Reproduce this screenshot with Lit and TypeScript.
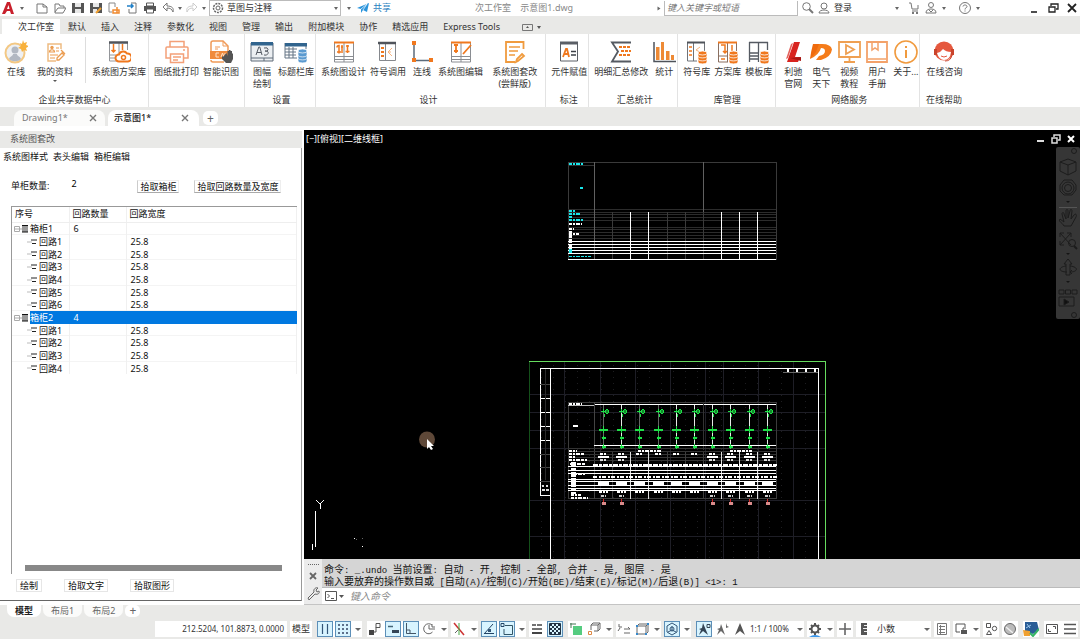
import { LitElement, html, svg, css, nothing } from "lit";
import { customElement, property, state } from "lit/decorators.js";
import { classMap } from "lit/directives/class-map.js";

const O = "#f0781e";
const G = "#5b5f66";

const db = svg`<g fill=${O} stroke="#fff" stroke-width=".8"><path d="M13 19v3c0 2.500 9 2.500 9 0v-3z"/><path d="M13 16v3c0 2.500 9 2.500 9 0v-3z"/><path d="M13 13v3c0 2.500 9 2.500 9 0v-3z"/><ellipse cx="17.500" cy="13" rx="4.500" ry="2"/></g>`;
const cabinet = svg`<path d="M2.500 2v20h19V2M2 16.500h20M2 19.500h20M12 2v20" stroke="#8a8d92" fill="none"/><path d="M2 2.500h20" stroke=${O} stroke-width="2"/>`;

const icons: Record<string, unknown> = {
  online: svg`<circle cx="11" cy="13" r="9.500" fill="#eef0f3" stroke="#f3c884" stroke-width="2"/><circle cx="11" cy="10" r="3.500" fill="#b2b8c2"/><path d="M5 19c1-3 4-3 4-5h4c0 2 3 2 4 5-3 3-9 3-12 0z" fill="#b2b8c2"/><path d="M19 0l1 3 3-1-1 3 3 1-3 2 1 3-3-1-2 2-1-3-3-1 3-2-1-3 2 1z" fill="#f8b13c"/>`,
  mine: svg`<path d="M18 9V4H5v17h8" fill="none" stroke="#eebc82" stroke-width="1.500"/><circle cx="9" cy="7.500" r="1.700" fill="#eb9c50"/><path d="M6.500 12c0-3 5-3 5 0zM13 8h3M13 11h3M7 15h8M7 18h5" stroke="#eb9c50" fill="none" stroke-width="1.200"/><path d="M14 18l5-5 2 2-5 5h-2zM18 10l4 4" stroke="#eb9c50" fill="none" stroke-width="1.300"/>`,
  cloud: svg`<path d="M2.500 3v18H10M12 3v12M20.500 3v7M2 15h7M2 18h7" stroke="#94969a" fill="none"/><path d="M2 2.500h19" stroke="#50545b" stroke-width="2.500"/><path d="M6.500 4v8m-2-2l2 2 2-2M15.500 4v6" stroke=${O} fill="none" stroke-width="1.500"/><path d="M12 21.500a3.500 3.500 0 010-7 4.500 4.500 0 018-1 4 4 0 011 8z" fill="#fff" stroke=${O} stroke-width="2"/><circle cx="16.500" cy="17.500" r="2" fill="none" stroke=${O} stroke-width="1.500"/>`,
  printer: svg`<g stroke="#f3a078" fill="none" stroke-width="1.500"><path d="M5 7V1.500h14V7M5 18H1V8q0-1 1-1h20q1 0 1 1v10h-4"/><path d="M5.500 14h13v8.500h-13z" fill="#fff"/><path d="M8 17h8M8 20h5M18 10h2"/></g>`,
  cad: svg`<path d="M2 11V3q0-2 2-2h10l5 5v5M2 20q0 2 2 2h11" fill="none" stroke="#f09a58" stroke-width="1.500"/><path d="M14 1v5h5M6 7h5M6 9h3" stroke="#f09a58" fill="none"/><path d="M1 11h19v8H1z" fill="#f08a3c"/><path d="M10 13H7v4h3m2 0l1.500-4 1.500 4m1-4v4" stroke="#ffe2c8" fill="none"/><path d="M14 17l-1-1v3l4 4h5l2-4v-5l-1-1v3-5h-1.500v4-5H20v5-4h-1.500v5l-1-3-1 1z" fill="#555"/>`,
  a3: svg`<path d="M1 3h22v18H1z" fill="#eceff2" stroke="#5e6b78"/><path d="M1 2h22v3.500H1z" fill="#31648e"/><path d="M6 15l2.800-8h1L12 15M7 12.500h4M14 8q4-1 4 1.500T15 11q4 0 3 2.500T14 15" fill="none" stroke="#555b64"/><path d="M1 18h22M14 18v3" stroke="#5e6b78"/>`,
  titlelib: svg`<path d="M1 3.500h21V9M1 3v15h12M1 9h12M1 12h11M1 15h11M5 7v11M9 7v11" fill="none" stroke="#657485"/><path d="M1 3h22v3.500H1z" fill="#31648e"/><g fill="#5b9ad0" stroke="#fff" stroke-width=".7"><path d="M14 18v3c0 2.500 9 2.500 9 0v-3z"/><path d="M14 15v3c0 2.500 9 2.500 9 0v-3z"/><path d="M14 12v3c0 2.500 9 2.500 9 0v-3z"/><ellipse cx="18.500" cy="11" rx="4.500" ry="2"/></g>`,
  design: svg`${cabinet}<path d="M5 7.500a2 2 0 012-2v8m-2-1.500h4M10 5v8M15.500 5v8m-2-1.500h4M14 6h3M9 7h2" stroke=${O} fill="none" stroke-width="1.500"/>`,
  symbol: svg`<path d="M3.500 3v17.500h16V4M9.500 4v16" fill="none" stroke="#85888d"/><path d="M2 3h18" stroke="#50545b" stroke-width="2.500"/><path d="M5 8h3M5 12h3M5 16h3" stroke=${O} stroke-width="1.800"/><path d="M16 8l-4 4 4 4m-2-5v2" stroke="#f5b480" fill="none"/>`,
  line: svg`<path d="M4 3v17.500h18" fill="none" stroke="#5c6b7b" stroke-width="1.500"/><path d="M2 1h4v4H2zM2 18h4v4H2zM19 18h4v4h-4z" fill=${O}/>`,
  edit: svg`${cabinet}<path d="M7 4v9M5 5h4M5 11h4M14 14l8-9" stroke=${O} stroke-width="1.800"/>`,
  revise: svg`<path d="M20.500 9V2H3v20h9M19 14l2 2-6 5-2 1 1-3z" fill="none" stroke="#f09b3e" stroke-width="1.800"/><path d="M6 7h11M6 11h9M6 15h6" stroke="#f09b3e" stroke-width="1.500"/>`,
  assign: svg`<path d="M3.500 3v18h17V3" fill="none" stroke=${G}/><path d="M3 3h18" stroke=${G} stroke-width="3"/><path d="M6 17l3-8h1l2 8M7 14h4" fill="none" stroke=${O} stroke-width="1.800"/><path d="M14 11.500h5M14 15h5" stroke="#3d4148" stroke-width="1.600"/>`,
  sum: svg`<path d="M22 2.500H3l6 9-6 10h19" fill="none" stroke="#555a62" stroke-width="1.800"/><path d="M10 7h12M12 11h10M10 15h12" stroke=${O} stroke-width="2" stroke-dasharray="3 1"/>`,
  chart: svg`<path d="M2 2v19.500h22" fill="none" stroke="#4e535b" stroke-width="1.500"/><path d="M4 7h3.500v13H4zM9 2h3v18H9zM14 11h3.500v9H14zM19 15h3v5h-3z" fill="#ee8a35"/>`,
  symlib: svg`<path d="M2.500 3v18H12M8.500 3v18M19.500 3v8" fill="none" stroke="#6f7379"/><path d="M2 2.500h18" stroke="#50545b" stroke-width="2"/><path d="M4 7h3M4 11h3M4 15h3" stroke=${O} stroke-width="1.500"/><path d="M15 7l-4 3 4 2" stroke="#f5b480" fill="none"/>${db}`,
  planlib: svg`<path d="M2.500 3v19H12M11.500 3v19M20.500 3v8M3 16h8" fill="none" stroke="#8a6f60"/><path d="M2 2.500h19" stroke=${O} stroke-width="2"/><path d="M5 5h4v8m-2-2l2 2 2-2M16 5v6M5 19h4" stroke=${O} fill="none" stroke-width="1.500"/>${db}`,
  tpllib: svg`<path d="M2.500 2v20M11.500 2v20M20.500 2v8M2 2.500h19M2 13h9M2 16h9M2 19h9" fill="none" stroke="#555a62" stroke-width="1.300"/>${db}`,
  lichi: svg`<path d="M13 2h6l-5 15h5l-2 5H6z" fill="#d8241f"/><path d="M10 4l2-1-5 15-2 1z" fill="#e4625c"/><path d="M9 18l11-1v4z" fill="#a91814"/>`,
  dq: svg`<path d="M8 4h5q9 0 10 5.500-1 7.500-11 10.500H7l3-4q6-1 6-5 0-3-4-3-2 7-11 11z" fill="#f57c1a"/><path d="M4 4h6L7 12 1 19q1-8 3-15z" fill="#ef6a0c"/>`,
  video: svg`<path d="M2 2h21v15H2zM12.500 17v4M7 22h11M9 5l8 4.500L9 14z" fill="none" stroke="#efa052" stroke-width="1.800"/>`,
  book: svg`<path d="M2 2h20v20H2z" fill="none" stroke="#f3a26a" stroke-width="1.800"/><path d="M7 2v8l3-2 3 2V2M3 19h18" fill="none" stroke="#f3a26a" stroke-width="1.500"/>`,
  about: svg`<circle cx="12" cy="12" r="11" fill="none" stroke="#f09a3e" stroke-width="1.600"/><path d="M12 10v8M12 6v2" stroke="#f09a3e" stroke-width="2"/>`,
  service: svg`<circle cx="12" cy="11" r="9.500" fill="#e5583e"/><path d="M5 13q4-1 6-4 3 3 8 3-1 8-7 8-5 0-7-7z" fill="#fff"/><path d="M2 9v6h3V9zM19 9v6h3V9z" fill="#c9442c"/><path d="M20 15q-1 6-7 6" fill="none" stroke="#c9442c"/><path d="M9 16q3 2 6 0" stroke="#e5583e" fill="none"/>`,
};

interface Tool { icon: string; lines: string[]; arrow?: boolean; sep?: boolean; late?: boolean; }
interface Group { title: string; cls: string; tools: Tool[]; }
const t = (icon: string, ...lines: string[]): Tool => ({ icon, lines });

const GROUPS: Group[] = [
  { title: "企业共享数据中心", cls: "data", tools: [t("online", "在线"), { ...t("mine", "我的资料"), arrow: true }, { ...t("cloud", "系统图方案库"), sep: true }] },
  { title: "", cls: "print", tools: [t("printer", "图纸批打印"), t("cad", "智能识图")] },
  { title: "设置", cls: "", tools: [t("a3", "图幅", "绘制"), t("titlelib", "标题栏库")] },
  { title: "设计", cls: "end", tools: [t("design", "系统图设计"), t("symbol", "符号调用"), t("line", "连线"), t("edit", "系统图编辑"), { ...t("revise", "系统图套改", "(尝鲜版)"), late: true }] },
  { title: "标注", cls: "", tools: [t("assign", "元件赋值")] },
  { title: "汇总统计", cls: "", tools: [t("sum", "明细汇总修改"), t("chart", "统计")] },
  { title: "库管理", cls: "lib", tools: [t("symlib", "符号库"), t("planlib", "方案库"), t("tpllib", "模板库")] },
  { title: "网络服务", cls: "", tools: [t("lichi", "利驰", "官网"), t("dq", "电气", "天下"), t("video", "视频", "教程"), t("book", "用户", "手册"), t("about", "关于...")] },
  { title: "在线帮助", cls: "last", tools: [t("service", "在线咨询")] },
];

@customElement("ribbon-bar")
class RibbonBar extends LitElement {
  static styles = css`
    :host { display: flex; background: #fff; height: 73px; }
    .group { display: flex; flex-direction: column; box-sizing: border-box; padding-left: 3px; border-right: 1px solid #e3e3e3; }
    .group.data { padding: 0 1px 0 2px; }
    .group.print { padding-right: 4px; }
    .group.end { padding-right: 7px; }
    .group.lib { padding-right: 2px; }
    .group.last { border: 0; padding-left: 4px; }
    .tools { display: flex; height: 59px; margin-right: -1px; }
    .tool { position: relative; display: flex; flex-direction: column; align-items: center; min-width: 28px; padding: 6px 2px 0; border: 0; background: none; font: inherit; color: #333; line-height: 12px; white-space: nowrap; }
    .data .tool { margin-right: 5px; }
    .data .tool:last-child { margin-right: 0; }
    .late { margin-left: 5px; }
    .tool svg { width: 24px; height: 24px; margin-bottom: 2px; }
    .caret { border: 2px solid transparent; border-top-color: #555; margin-top: 2px; }
    .sep { width: 1px; margin: 3px 4px 10px 5px; background: #ddd; }
    .title { line-height: 14px; text-align: center; color: #333; white-space: nowrap; }
  `;
  render() {
    return GROUPS.map((g) => html`<section class="group ${g.cls}">
      <div class="tools">${g.tools.map((x) => html`${x.sep ? html`<span class="sep"></span>` : nothing}
        <button class=${classMap({ tool: true, late: !!x.late })}><svg viewBox="0 0 24 24">${icons[x.icon]}</svg>${x.lines.map((l) => html`<span>${l}</span>`)}${x.arrow ? html`<span class="caret"></span>` : nothing}</button>`)}
      </div><div class="title">${g.title}</div></section>`);
  }
}

const rng = (a: number, b: number, s: number) => { const r: number[] = []; for (let i = a; i <= b; i += s) r.push(i); return r; };
const seg = (x1: number, y1: number, x2: number, y2: number, c: string) => svg`<path d="M${x1} ${y1}L${x2} ${y2}" stroke=${c}/>`;
const H = (y: number, x1: number, x2: number, c = "#fff") => seg(x1, y + 0.5, x2, y + 0.5, c);
const V = (x: number, y1: number, y2: number, c = "#fff") => seg(x + 0.5, y1, x + 0.5, y2, c);
const mark = (x: number, y: number, w: number, c: string, h = 2, dash = "3 1 2 1 4 1") => svg`<path d="M${x} ${y}h${w}" stroke=${c} stroke-width=${h} stroke-dasharray=${dash}/>`;

@customElement("drawing-canvas")
class DrawingCanvas extends LitElement {
  static styles = css`
    :host { position: relative; display: flex; flex-direction: column; background: #000; color: #fff; overflow: hidden; min-height: 0; }
    .scene { position: absolute; inset: 0; width: 100%; height: 100%; }
    .head { position: relative; display: flex; align-items: center; height: 17px; padding: 0 4px 0 2px; }
    .head button, .nav button { border: 0; padding: 0; background: none; color: inherit; font: inherit; display: flex; }
    .space { flex: 1; }
    .win { width: 10px; height: 10px; margin-left: 5px; }
    .nav { position: relative; align-self: flex-end; width: 24px; height: 172px; background: #363636; display: flex; flex-direction: column; align-items: center; justify-content: space-between; border-radius: 2px; }
    .nav svg { width: 20px; height: 172px; }
  `;
  render() {
    const cols = [603, 621, 639, 658, 676, 694, 712, 730, 749, 767];
    const seps = [612, 630, 648, 667, 685, 703, 721, 739, 757];
    const hot = [630, 648, 721, 739, 757];
    const loads = [603, 621, 712, 730, 749, 767];
    return html`<svg class="scene" shape-rendering="crispEdges" fill="none" role="img" aria-label="图纸">
      <g transform="translate(-304 -130)">
        <path d="M568.500 162.500H776.500V259.500H568.500z" stroke="#3a3a3a"/>
        ${H(165, 568, 594, "#333")}
        ${[209, 212, 214, 217, 220, 227, 229, 232, 235, 238].map((y) => H(y, 568, 776, "#2c2c2c"))}
        ${V(594, 162, 259, "#606060")}${V(703, 162, 212, "#606060")}
        ${seps.map((x) => V(x, 212, 259, hot.includes(x) ? "#fff" : "#3a3a3a"))}
        ${[241, 244, 247, 250, 253, 259].map((y) => H(y, 568, 776))}
        ${mark(569, 164, 14, "#18e6ea")}${mark(580, 188, 4, "#18e6ea")}
        ${mark(569, 211, 6, "#18e6ea")}${mark(569, 214, 11, "#18e6ea")}${mark(569, 217, 3, "#18e6ea")}${mark(569, 220, 14, "#18e6ea")}
        ${mark(569, 224, 13, "#fff")}${mark(569, 229, 5, "#fff")}${mark(569, 234, 10, "#fff")}
        <path d="M570.500 231v20" stroke="#fff" stroke-width="3" stroke-dasharray="7 1 4 1"/>
        ${mark(569, 250, 3, "#18e6ea")}${mark(569, 252, 3, "#18e6ea")}${mark(569, 256.500, 22, "#18e6ea", 1)}

        ${rng(541, 811, 12).map((x) => svg`<path d="M${x + 0.5} 365V559" stroke="#1d1d20" stroke-dasharray="1 5"/>`)}
        ${[564, 600, 635, 670, 705, 723, 758, 793].map((x) => V(x, 362, 559, "#1e1e26"))}
        ${[394, 412, 430, 448, 500, 536].map((y) => H(y, 530, 825, "#1e1e26"))}
        ${V(529, 361, 559, "#14501a")}${H(361, 529, 826, "#66dc5e")}${V(825, 361, 559, "#66dc5e")}
        ${V(550, 368, 559)}${H(368, 540, 819)}${V(818, 368, 559)}${V(540, 368, 496)}${H(495, 540, 551)}
        ${[398, 412, 426, 440].map((y) => H(y, 540, 550))}${[384, 454, 467, 481].map((y) => H(y, 540, 550, "#444"))}${V(545, 369, 480, "#2a2a2a")}
        ${mark(542, 486, 7, "#ddd", 2, "2 2")}${mark(542, 490, 7, "#ddd", 2, "3 1")}
        ${H(372, 783, 818, "#666")}${mark(787, 370.500, 31, "#fff", 3, "2 7")}

        <path d="M568.500 402.500H776.500V498.500H568.500z" stroke="#3c3c3c"/>
        ${H(404, 594, 776)}${H(405, 568, 594, "#bbb")}${mark(569, 403.500, 13, "#fff")}${V(594, 402, 499, "#444")}${V(703, 402, 450, "#333")}
        ${mark(573, 425.500, 5, "#fff", 2, "5")}
        ${H(445, 594, 776)}
        ${[448, 451, 454, 457, 460].map((y) => H(y, 568, 776, "#333"))}
        ${seps.map((x) => V(x, 452, 499, hot.includes(x) ? "#ddd" : "#3c3c3c"))}
        ${cols.map((x, i) => svg`${V(x, 405, 446, i % 3 === 1 || i > 4 ? "#e8e8e8" : "#666")}
          <path d="M${x} 409v4m1 1v3M${x - 2} 411h4M${x + 0.5} 426v7M${x + 0.5} 436v4M${x + 0.5} 444v5" stroke="#1fe048"/>
          <circle cx=${x + 4} cy="411.500" r="1.700" fill="#128a2c" stroke="#1fe048"/>
          ${mark(x - 4, 430, 9, "#1fe048", 2, "9")}${mark(x - 1, 438, 4, "#1fe048", 2, "4")}${mark(x - 1, 447, 4, "#1fe048", 2, "4")}
          ${mark(x - 3, 454, 6, "#fff")}${mark(x - 4, 492, 9, "#fff", 2)}`)}
        ${mark(638, 450.500, 23, "#fff")}${mark(730, 450.500, 22, "#fff")}
        ${loads.map((x) => svg`${mark(x - 5, 457, 11, "#fff", 2, "11")}${mark(x - 3, 460, 6, "#ddd")}${mark(x - 2, 496, 5, "#ccc")}
          <path d="M${x + 0.5} 499v3" stroke="#d02020"/><path d="M${x - 1} 502h4v3h-4z" fill="#d98c8c"/>`)}
        ${mark(593, 464.500, 184, "#fff", 2, "5 1 3 1")}
        ${[466, 470, 473, 479, 481, 485, 488, 490].map((y) => H(y, 568, 776))}
        ${mark(593, 476.500, 184, "#fff", 2, "4 2 2 1")}
        ${cols.map((x) => mark(x - 5, 483, 11, "#fff", 3, "11"))}
        <path d="M573 462v32" stroke="#fff" stroke-width="5" stroke-dasharray="5 1 3 1"/>
        ${mark(569, 451, 8, "#fff")}${mark(569, 454, 16, "#fff")}${mark(569, 457, 6, "#fff")}${mark(569, 459.500, 18, "#fff")}${mark(570, 464, 15, "#fff")}${mark(571, 474, 14, "#fff")}${mark(571, 495, 10, "#fff")}${mark(571, 497.500, 17, "#fff")}

        <path d="M316 500l4 4 4-4M320.500 504v5M315.500 511v36M312.500 544v6" stroke="#fff"/>
        <path d="M354 538.500h1M362 546.500h1" stroke="#fff"/><path d="M356 539.500h1M362 538.500h1" stroke="#666"/>
        <g shape-rendering="auto"><circle cx="427" cy="439.500" r="8" fill="#5e4838"/><path d="M427 439v10l2-2 2 3 2-1-2-3h3z" fill="#fff"/></g>
      </g></svg>
      <div class="head"><button>[−][俯视][二维线框]</button><span class="space"></span>
        <button class="win" aria-label="最小化"><svg viewBox="0 0 10 10"><path d="M1 6h7v2H1z" fill="#ddd"/></svg></button>
        <button class="win" aria-label="还原"><svg viewBox="0 0 10 10" fill="none" stroke="#ddd" stroke-width="1.500"><path d="M3 3V1h6v5H7M1 4h5v5H1z"/></svg></button>
        <button class="win" aria-label="关闭"><svg viewBox="0 0 10 10" stroke="#fff" stroke-width="2"><path d="M2 2l6 6M8 2L2 8"/></svg></button>
      </div>
      <div class="nav"><svg viewBox="0 0 20 172" fill="none" stroke="#1c1c1c">
        <circle cx="16" cy="4" r="2.500"/><path d="M10 12l8 3v9l-8 4-8-4v-9zM2 15l8 3 8-3M10 18v10"/><path d="M6 33h8l4 5v5l-4 5H6l-4-4v-6z"/><circle cx="10" cy="41" r="6"/><circle cx="10" cy="41" r="3.500"/>
        <path d="M8 54h4l-2 2zM8 106h4l-2 2zM8 134h4l-2 2z" fill="#151515" stroke="none"/><path d="M1 60.500h18" stroke="#555"/>
        <path d="M6 79c-2-4-6-4-4-7l4 3-2-8c0-2 2-2 2 0l2 5V64c0-2 2-2 2 0v7l2-7c0-2 2-2 2 0l-1 8 3-4c2-2 3 0 2 2l-5 9z"/>
        <path d="M2 86l11 12M13 86L2 98M2 90v-4h4M9 86h4v4M2 94v4h4"/><circle cx="14" cy="96" r="3.500"/><path d="M16 99l3 3" stroke-width="2"/>
        <path d="M8 128v-11H6l4-5 4 5h-2v11zM8 119c-8 1-8 6 1 6M12 119c9 1 8 6 0 6l2-2m-2 2l2 2"/>
        <path d="M1 143h5v4H1zM7.500 143h5v4h-5zM14 143h5v4h-5zM1 150h15v9H1z"/><path d="M6 152v6l5-3z" fill="#111"/><circle cx="16" cy="168" r="2.500"/>
      </svg></div>`;
  }
}

@customElement("revision-panel")
class RevisionPanel extends LitElement {
  @state() private selected = 7;
  static styles = css`
    :host { display: flex; flex-direction: column; background: #fff; min-height: 0; color: #111; padding: 1px 2px 4px 0; }
    .head { height: 17px; line-height: 15px; background: #e9e9e7; padding-left: 10px; color: #555; }
    .body { flex: 1; display: flex; flex-direction: column; border-right: 1px solid #999; border-bottom: 1px solid #666; min-height: 0; }
    .tabs { display: flex; gap: 5px; padding: 2px 0 0 3px; height: 14px; line-height: 14px; }
    button { font: inherit; color: inherit; background: #fff; border: 0; padding: 0; white-space: nowrap; }
    .count { display: flex; align-items: center; margin: 15px 0 13px 11px; height: 14px; white-space: nowrap; }
    .count input { width: 40px; margin: 0 26px 5px 22px; padding: 0; border: 0; font: inherit; height: 12px; }
    .count .push { height: 13px; line-height: 11px; padding: 0 2px; border: 1px solid #eee; border-bottom-color: #aaa; border-left-color: #ccc; }
    .count .push + .push { margin-left: 15px; }
    .tree { flex: 1; display: flex; flex-direction: column; margin: 0 4px 0 11px; border-top: 1px solid #999; border-left: 1px solid #999; min-height: 0; }
    table { border-collapse: collapse; table-layout: fixed; width: 100%; }
    .name { width: 57px; } .num { width: 57px; }
    th { font-weight: 400; text-align: left; height: 15px; line-height: 14px; padding: 0 3px; border-bottom: 1px solid #eee; border-right: 1px solid #f0f0f0; box-sizing: border-box; }
    td { height: 13px; line-height: 12px; padding: 0 0 0 4px; border-right: 1px solid #f0f0f0; box-sizing: border-box; }
    tr:nth-child(3n) td { height: 12px; line-height: 11px; }
    tr:nth-child(odd) td { box-shadow: inset 0 -1px #f4f4f4; }
    tbody td:first-child { padding-left: 2px; }
    .node { display: flex; align-items: center; }
    .node svg { width: 16px; height: 10px; flex: none; }
    .leaf { padding-left: 9px; }
    .node span { flex: 1; }
    tr.on td { background: #0078e0; color: #fff; border-color: #0078e0; box-shadow: none; }
    tr.on td:first-child { background: linear-gradient(90deg, #fff 18px, #0078e0 18px); }
    .scroll { height: 6px; background: #888; margin: auto 15px 3px 13px; }
    .foot { display: flex; gap: 22px; padding: 5px 0 8px 16px; }
    .foot button { border: 1px solid #e6e6e6; padding: 0 3px; height: 13px; line-height: 11px; }
  `;
  render() {
    const rows: { name: string; n?: number; w?: string }[] = [];
    [6, 4].forEach((n, b) => {
      rows.push({ name: `箱柜${b + 1}`, n });
      for (let i = 1; i <= n; i++) rows.push({ name: `回路${i}`, w: "25.8" });
    });
    return html`<div class="head">系统图套改</div><div class="body">
      <nav class="tabs"><button>系统图样式</button><button>表头编辑</button><button>箱柜编辑</button></nav>
      <div class="count"><label for="qty">单柜数量:</label><input id="qty" value="2"><button class="push">拾取箱柜</button><button class="push">拾取回路数量及宽度</button></div>
      <div class="tree"><table><thead><tr><th class="name">序号</th><th class="num">回路数量</th><th>回路宽度</th></tr></thead><tbody>
        ${rows.map((r, i) => html`<tr class=${classMap({ on: i === this.selected })} @click=${() => (this.selected = i)}>
          <td><div class=${classMap({ node: true, leaf: !r.n })}><svg viewBox="0 0 16 10">${r.n
            ? svg`<path d="M.5 2.500h5v5h-5zM1 5h7" fill="none" stroke="#aaa"/><path d="M8 1h6v7H8z" fill="#999"/><path d="M8 1.500h6M8 8h6" stroke="#111"/>`
            : svg`<path d="M4 5h5" stroke="#bbb"/><path d="M8 3h6M9 6.500h4" stroke="#222" fill="none"/>`}</svg><span>${r.name}</span></div></td>
          <td>${r.n ?? ""}</td><td>${r.w ?? ""}</td></tr>`)}
      </tbody></table><div class="scroll"></div></div>
      <div class="foot"><button>绘制</button><button>拾取文字</button><button>拾取图形</button></div></div>`;
  }
}

@customElement("command-line")
class CommandLine extends LitElement {
  static styles = css`
    :host { display: grid; grid-template-columns: 18px 1fr; background: #ececec; height: 46px; box-sizing: border-box; border-bottom: 1px solid #c4c4c4; }
    .strip svg { width: 18px; height: 45px; display: block; }
    .log { background: #d5d5d5; height: 29px; box-sizing: border-box; padding: 4px 2px 0; border-bottom: 1px solid #bbb; font-size: 10px; line-height: 12px; color: #111; white-space: nowrap; overflow: hidden; }
    .log div { height: 12px; }
    .ascii { font: 9px/12px "Liberation Mono", monospace; white-space: pre; }
    .entry { display: flex; align-items: center; background: #fff; height: 16px; padding-left: 3px; }
    .entry svg { width: 19px; height: 10px; margin-right: 6px; }
    input { flex: 1; border: 0; padding: 0; font: italic 10px/14px "Noto Sans", "Noto Sans CJK SC", sans-serif; background: none; outline: 0; }
    input::placeholder { color: #888; }
  `;
  private mixed(s: string) {
    return s.split(/([\x20-\x7e]+)/).map((p, i) => (i % 2 ? html`<span class="ascii">${p}</span>` : p));
  }
  render() {
    return html`<div class="strip"><svg viewBox="0 0 18 45" fill="none" stroke="#666"><path d="M4 5.500h12" stroke-dasharray="1 1"/><path d="M6 14l6 6M12 14l-6 6" stroke-width="1.800"/><path d="M4 39l6-6c-1-3 2-5 4-4l-2 2 1 2 2-1c1 2-1 4-4 3l-6 6z"/></svg></div>
      <div><div class="log"><div>${this.mixed("命令: _.undo 当前设置: 自动 - 开, 控制 - 全部, 合并 - 是, 图层 - 是")}</div><div>${this.mixed("输入要放弃的操作数目或 [自动(A)/控制(C)/开始(BE)/结束(E)/标记(M)/后退(B)] <1>: 1")}</div></div>
      <div class="entry"><svg viewBox="0 0 19 10"><path d="M.5.500h11v9H.5zM2.500 3l2 2-2 2M6 7.500h3" fill="none" stroke="#555"/><path d="M14 4h5l-2.500 3z" fill="#555"/></svg><input aria-label="命令" placeholder="键入命令"></div></div>`;
  }
}

const st: Record<string, unknown> = {
  grid: svg`<path d="M5.500 3v10M10.500 3v10" stroke="#357" stroke-width="1.200"/>`,
  dots: svg`<path d="M3 4h10M3 8h10M3 12h10" stroke="#346" stroke-width="1.500" stroke-dasharray="2 2"/>`,
  snap: svg`<path d="M9 2.500h4v4H9zM9 6v5H4" stroke="#555"/><path d="M2 9h5v5H2z" fill="#444"/>`,
  infer: svg`<path d="M3 5.500h5" stroke="#467" stroke-width="1.500"/><path d="M7 9h7v3H7z" fill="#345"/>`,
  ortho: svg`<path d="M3.500 2v10.500H13M3 9h4v4" stroke="#456"/>`,
  polar: svg`<path d="M11 4a5 5 0 10.500 7M8 8h6M8 8V4M11 3v3h3" stroke="#666"/>`,
  axes: svg`<path d="M3 2l10 12" stroke="#c33" stroke-width="1.500"/><path d="M8 2v12" stroke="#4a4"/><path d="M4 12l3-3" stroke="#666"/>`,
  track: svg`<path d="M3 13L12 3M3 12.500h10" stroke="#246"/><path d="M7 8h3v3H7z" fill="#357"/>`,
  osnap: svg`<path d="M6 4.500h7.500v9H5V8" stroke="#356"/><path d="M2 2.500h3v3H2z" stroke="#246"/>`,
  weight: svg`<path d="M3 4h4m1 0h5M3 8h10" stroke="#444" stroke-width="1.500"/><path d="M3 12h10" stroke="#444" stroke-width="2"/>`,
  checker: svg`<path d="M2.500 2.500h11v11h-11z" stroke="#234"/><path d="M3 4h10M3 8h10M3 12h10" stroke="#234" stroke-width="2" stroke-dasharray="2 2"/><path d="M5 6h8M5 10h8" stroke="#234" stroke-width="2" stroke-dasharray="2 2"/>`,
  cycle: svg`<path d="M5 5h9v9H5z" fill="#55cc80"/><path d="M2 3h6M3 2v5" stroke="#475"/>`,
  cube: svg`<path d="M5 4l2-2h7v6l-2 2H8M5 4h7v6M12 4l2-2M5 4v5" stroke="#666"/><path d="M2.500 10.500h3v3h-3z" stroke="#d84"/>`,
  ucs: svg`<path d="M3 3v3h3M4 7l-2 3M8 8h6l-2-2M8 12h6" stroke="#666"/>`,
  box: svg`<path d="M3 5l2-2h9v8l-2 2H3zM3 5h9v8M12 5l2-2" stroke="#666"/><path d="M2 4h2v2H2zM11 12h2v2h-2zM13 2h2v2h-2zM2 12h2v2H2z" fill="#38c"/>`,
  gizmo: svg`<path d="M8 2l5 3v6l-5 3-5-3V5zM8 5v4l-4 2M8 9l4 2" stroke="#357"/><circle cx="8" cy="8" r="2" stroke="#357"/>`,
  ann: svg`<path d="M7 2l5 12-5-4-4 4 2-5-2-1 3-1z" fill="#345"/><path d="M11 3.500h3v3h-3z" stroke="#345"/>`,
  ann2: svg`<path d="M7 3l4 11-4-4-4 4 2-5-2-1 3-1zM12 2l1 3 2 1-3 1z" fill="#666"/>`,
  ann3: svg`<path d="M8 2l5 12-5-4-5 4z" fill="#555"/>`,
  gear: svg`<path d="M8 2v3M8 11v3M2 8h3M11 8h3M4 4l2 2M10 10l2 2M4 12l2-2M10 6l2-2" stroke="#555" stroke-width="2"/><circle cx="8" cy="8" r="3.500" stroke="#555" stroke-width="2"/><path d="M2 16q6-4 12 0z" fill="#3b96ea"/>`,
  plus: svg`<path d="M8 2v12M2 8h12" stroke="#666" stroke-width="1.600"/>`,
  ruler: svg`<path d="M5 2h6v12H5z" fill="#555"/><path d="M8 4.500h3M7 7.500h4M8 10.500h3" stroke="#eee"/>`,
  props: svg`<path d="M3.500 2.500h9v11h-9zM5 5.500h6M5 8.500h6M5 11.500h6M6.500 4v9" stroke="#777"/>`,
  lock: svg`<path d="M12 6V3H3v8h4" stroke="#555"/><path d="M8 9h6v4H8z" fill="#555"/><path d="M10 9V7h3" stroke="#555"/>`,
  isolate: svg`<path d="M3.500 2.500h4v4h-4z" stroke="#555"/><circle cx="11.500" cy="7.500" r="2.200" stroke="#555"/><path d="M3.500 13.500l2.500-4 2.500 4z" stroke="#555"/>`,
  perf: svg`<circle cx="8" cy="8" r="5.500" fill="#bbb" stroke="#666"/><path d="M4 6l7 6" stroke="#eee" stroke-width="1.500"/>`,
  cloud: svg`<path d="M2 1h12l2 8-6 4-8-3z" fill="#2a5d96"/><path d="M0 9l7 1v5H1z" fill="#f0a030"/><path d="M7 12l3 3 6-7" stroke="#35b565" stroke-width="2"/><path d="M4 3l3 4M3 7l5-3" stroke="#9cc8ee"/>`,
  full: svg`<path d="M2.500 3.500h11v9h-11zM9 5.500h2.500V8M7 10.500H4.500V8" stroke="#555"/>`,
  menu: svg`<path d="M2 3.500h12M2 8h12M2 12.500h12" stroke="#555" stroke-width="1.500"/>`,
};

@customElement("status-bar")
class StatusBar extends LitElement {
  static styles = css`
    :host { display: flex; justify-content: flex-end; height: 18px; background: #e9e9e7; white-space: nowrap; gap: 3px; color: #333; padding-right: 2px; overflow: hidden; }
    .cell, .group { display: flex; align-items: center; background: #fff; height: 16px; }
    .coords { width: 129px; padding-right: 3px; justify-content: flex-end; font-size: 8px; }
    .model { padding: 0 2px; }
    .group { gap: 2px; }
    .wide { margin-left: 2px; }
    button, select { border: 0; padding: 0; background: none; font: inherit; color: inherit; }
    .icon { display: flex; width: 16px; height: 16px; flex: none; }
    .icon svg { width: 16px; height: 16px; }
    .icon.on { background: #d8f4ff; box-shadow: inset 0 0 0 1px #5c8fb8; }
    .arrow { width: 9px; height: 16px; display: flex; align-items: center; justify-content: center; }
    .arrow::after { content: ""; border: 3px solid transparent; border-top-color: #666; border-bottom: 0; }
    .scale { width: 43px; text-align: left; font-size: 8px; }
    select { appearance: none; width: 43px; margin-left: 3px; }
  `;
  private g(spec: string, cls = "") {
    return html`<div class="group ${cls}">${spec.split(" ").map((s) => s === "v" ? html`<button class="arrow" aria-label="展开"></button>`
      : s === "%" ? html`<button class="scale">1:1 / 100%</button>`
      : s === "=" ? html`<select aria-label="单位"><option>小数</option></select>`
      : html`<button aria-label=${s.replace("*", "")} class=${classMap({ icon: true, on: s[0] === "*" })}><svg viewBox="0 0 16 16" fill="none">${st[s.replace("*", "")]}</svg></button>`)}</div>`;
  }
  render() {
    return html`<div class="cell coords">212.5204, 101.8873, 0.0000</div><button class="cell model">模型</button>
      ${this.g("*grid *dots v", "wide")}${this.g("snap *infer *ortho polar v", "wide")}${this.g("axes v")}${this.g("*track *osnap v")}${this.g("weight *checker")}
      ${this.g("cycle cube v", "wide")}${this.g("ucs box v")}${this.g("*gizmo v")}${this.g("*ann ann2 ann3 % v", "wide")}${this.g("gear v")}${this.g("plus")}
      ${this.g("ruler = v")}${this.g("props")}${this.g("lock v")}${this.g("isolate")}${this.g("perf")}${this.g("cloud", "wide")}${this.g("full menu", "wide")}`;
  }
}

const tb: Record<string, unknown> = {
  new: svg`<path d="M1 11V2h6l4 3v6zM7 2v3h4" stroke="#777"/>`,
  open: svg`<path d="M1 10V2h4l1 2h4v2M1 10l3-4h8l-3 5H1z" stroke="#777"/>`,
  save: svg`<path d="M0 1h12v10H0z" fill="#555"/><path d="M3 1h6v4H3zM3 7h6v4H3z" fill="#e8e8e8"/>`,
  saveas: svg`<path d="M0 1h12v10H0z" fill="#555"/><path d="M3 1h6v4H3zM3 7h4v4H3z" fill="#e8e8e8"/><path d="M6 11l5-5" stroke="#f0a030" stroke-width="2"/>`,
  web: svg`<path d="M1 1v9h3M1 1h6v4" stroke="#888"/><path d="M9 5v6M5 8h6v3H5z" stroke="#f08a30" stroke-width="1.500"/>`,
  mobile: svg`<path d="M5 1h5v10H3V7" stroke="#777"/><path d="M1 4h6M5 2l2 2-2 2" stroke="#2080c8" stroke-width="1.500"/>`,
  print: svg`<path d="M0 4h12v5H0z" fill="#555"/><path d="M2.500 1h7v3h-7zM2.500 7h7v4h-7z" fill="#fff" stroke="#555"/>`,
  undo: svg`<path d="M5 1L1 5l4 4V6c3 0 5 1 6 4 1-4-1-6-6-6z" stroke="#777"/>`,
  redo: svg`<path d="M7 1l4 4-4 4V6C4 6 2 7 1 10 0 6 2 4 7 4z" stroke="#ccc"/>`,
  gear: svg`<circle cx="6" cy="6" r="4.500" stroke="#666" stroke-width="1.500" stroke-dasharray="2 1"/><circle cx="6" cy="6" r="2" stroke="#666"/>`,
  send: svg`<path d="M0 6l12-5-2 9-4-2-2 3V7z" fill="#2a94dc"/><path d="M4 7l6-5-4 6" stroke="#fff" stroke-width=".7"/>`,
  find: svg`<circle cx="4.500" cy="4.500" r="3.800" stroke="#777"/><path d="M7 7l4 4" stroke="#777" stroke-width="2"/>`,
  user: svg`<circle cx="6" cy="4" r="3" stroke="#777"/><path d="M1 11c0-4 10-4 10 0z" stroke="#777"/>`,
  cart: svg`<path d="M1 1h2l1 6h6V3M4 9h6" stroke="#777"/><path d="M4 10h2v2H4zM8 10h2v2H8z" fill="#777"/>`,
  app: svg`<circle cx="6" cy="3" r="2.500" stroke="#777"/><path d="M1 11c0-3 2-4 5-4s5 1 5 4zM4 8l2 2 2-2" stroke="#777"/>`,
  help: svg`<circle cx="6" cy="6" r="5.500" stroke="#777"/><path d="M4 4.500c0-2 4-2 4 0 0 1.500-2 1-2 3M6 8.500v1" stroke="#777"/>`,
  min: svg`<path d="M3 10h6" stroke="#222" stroke-width="1.600"/>`,
  restore: svg`<path d="M4 4V2h7v5H9M2 5h6v5H2z" stroke="#222" stroke-width="1.300"/>`,
  close: svg`<path d="M2 2l8 8M10 2l-8 8" stroke="#222" stroke-width="1.800"/>`,
};

@customElement("app-root")
class AppRoot extends LitElement {
  @property() workspace = "草图与注释";
  static styles = css`
    :host { display: flex; flex-direction: column; height: 100vh; overflow: hidden; background: #e9e9e7; font: 9px/12px "Noto Sans", "Noto Sans CJK SC", sans-serif; color: #333; }
    button, select { font: inherit; color: inherit; border: 0; padding: 0; background: none; white-space: nowrap; }
    .bar { display: flex; align-items: center; height: 16px; background: #fff; padding: 0 2px; }
    .ico { display: block; width: 12px; height: 12px; flex: none; }
    .ico svg { display: block; width: 12px; height: 12px; }
    .caret { width: 0; height: 0; border: 2px solid transparent; border-top: 3px solid #666; border-bottom: 0; flex: none; }
    .logo { width: 12px; height: 14px; }
    .logo svg { display: block; width: 12px; height: 14px; }
    .files, .history { display: flex; align-items: center; gap: 6px; padding-left: 12px; }
    .history { gap: 4px; padding: 0 3px 0 4px; }
    .combo { display: flex; align-items: center; width: 126px; height: 14px; border: 1px solid #bbb; padding: 0 2px; }
    .combo select { appearance: none; flex: 1; margin-left: 3px; }
    .share { display: flex; align-items: center; gap: 4px; color: #2a7fc0; margin-left: 6px; }
    .drop { margin-left: 6px; }
    .doc { flex: 1; text-align: center; color: #888; white-space: pre; }
    .search { width: 128px; height: 14px; box-sizing: content-box; padding: 0 2px; margin: 0 4px 0 3px; border: 1px solid #bbb; border-top: 0; font: italic 9px/12px "Noto Sans", "Noto Sans CJK SC", sans-serif; }
    .search::placeholder { color: #777; }
    .acct { display: flex; align-items: center; gap: 4px; margin-left: 4px; width: 69px; }
    .right { display: flex; align-items: center; gap: 5px; margin-left: 8px; }
    .right .caret:first-child { margin-right: 4px; }
    .help { margin-left: 8px; }
    .window { display: flex; gap: 7px; margin-left: 48px; }
    .side { transform: rotate(-90deg); }
    .menu { display: flex; align-items: flex-end; height: 18px; gap: 15px; padding-left: 2px; }
    .menu button { height: 15px; line-height: 15px; }
    .menu .active { background: #fff; padding: 0 6px 0 16px; margin-right: -7px; }
    .menu svg { width: 22px; height: 15px; margin-left: 6px; }
    .docs { display: flex; align-items: flex-end; height: 19px; padding-left: 14px; gap: 3px; border-bottom: 4px solid #fff; }
    .doctab { display: flex; align-items: center; width: 75px; height: 16px; padding: 0 8px; background: #fbfbfa; border-radius: 8px 8px 0 0; font-size: 9px; color: #777; }
    .doctab span { flex: 1; }
    .doctab.active { color: #222; font-weight: 500; background: #fff; padding: 0 10px 0 6px; }
    .x, .x svg { width: 8px; height: 8px; display: block; }
    .add { width: 15px; height: 14px; background: #fff; border-radius: 5px; color: #666; font-size: 12px; line-height: 13px; }
    .docs .add { margin: 0 0 1px 1px; }
    .main { flex: 1; min-height: 0; display: grid; grid-template-columns: 304px 1fr; }
    .work { display: flex; flex-direction: column; min-height: 0; min-width: 0; }
    drawing-canvas { flex: 1; }
    .layouts { display: flex; height: 16px; padding-left: 7px; gap: 2px; }
    .layouts button { height: 12px; line-height: 12px; }
    .layouts .lay { background: #fbfbfa; padding: 0 8px; border-radius: 0 0 7px 7px; color: #666; }
    .layouts .active { background: #fff; font-weight: 700; color: #222; }
  `;
  private ico(n: string, label = n) {
    return html`<button class="ico" aria-label=${label}><svg viewBox="0 0 12 12" fill="none">${tb[n]}</svg></button>`;
  }
  render() {
    const close = html`<button class="x" aria-label="关闭"><svg viewBox="0 0 8 8" stroke="#777" stroke-width="1.400"><path d="M1 1l6 6M7 1L1 7"/></svg></button>`;
    return html`
      <header class="bar">
        <button class="logo" aria-label="应用程序菜单"><svg viewBox="0 0 12 14"><path d="M0 13L5 1h3l4 12H9l-1-3H5l-2 3zM5 8h2.500L6.500 4z" fill="#c8202c" fill-rule="evenodd"/></svg></button><span class="caret drop"></span>
        <div class="files">${["new", "open", "save", "saveas", "web", "mobile", "print", "undo"].map((n) => this.ico(n))}</div>
        <div class="history"><span class="caret"></span>${this.ico("redo")}<span class="caret"></span></div>
        <label class="combo">${tbIcon("gear")}<select aria-label="工作空间"><option>${this.workspace}</option></select><span class="caret"></span></label><span class="caret drop"></span>
        <button class="share">${tbIcon("send")}共享</button>
        <span class="doc">次工作室    示意图1.dwg</span><span class="caret side"></span>
        <input class="search" aria-label="搜索" placeholder="键入关键字或短语">${this.ico("find")}
        <button class="acct">${tbIcon("user")}登录</button>
        <div class="right"><span class="caret"></span>${this.ico("cart")}${this.ico("app")}<span class="caret"></span><span class="help">${this.ico("help")}</span><span class="caret"></span></div>
        <div class="window">${this.ico("min")}${this.ico("restore")}${this.ico("close")}</div>
      </header>
      <nav class="menu">${["次工作室", "默认", "插入", "注释", "参数化", "视图", "管理", "输出", "附加模块", "协作", "精选应用", "Express Tools"].map((m, i) => html`<button class=${classMap({ active: i === 0 })}>${m}</button>`)}
        <svg viewBox="0 0 22 15"><path d="M1.500 5.500h10v6h-10z" fill="none" stroke="#777"/><path d="M5 9h3l-1.500-2zM16 7h4l-2 3z" fill="#555"/></svg></nav>
      <ribbon-bar></ribbon-bar>
      <div class="docs"><div class="doctab"><span>Drawing1*</span>${close}</div><div class="doctab active"><span>示意图1*</span>${close}</div><button class="add">+</button></div>
      <main class="main"><revision-panel></revision-panel><div class="work"><drawing-canvas></drawing-canvas><command-line></command-line></div></main>
      <nav class="layouts"><button class="lay active">模型</button><button class="lay">布局1</button><button class="lay">布局2</button><button class="add">+</button></nav>
      <status-bar></status-bar>`;
  }
}

function tbIcon(n: string) {
  return html`<span class="ico"><svg viewBox="0 0 12 12" fill="none">${tb[n]}</svg></span>`;
}
